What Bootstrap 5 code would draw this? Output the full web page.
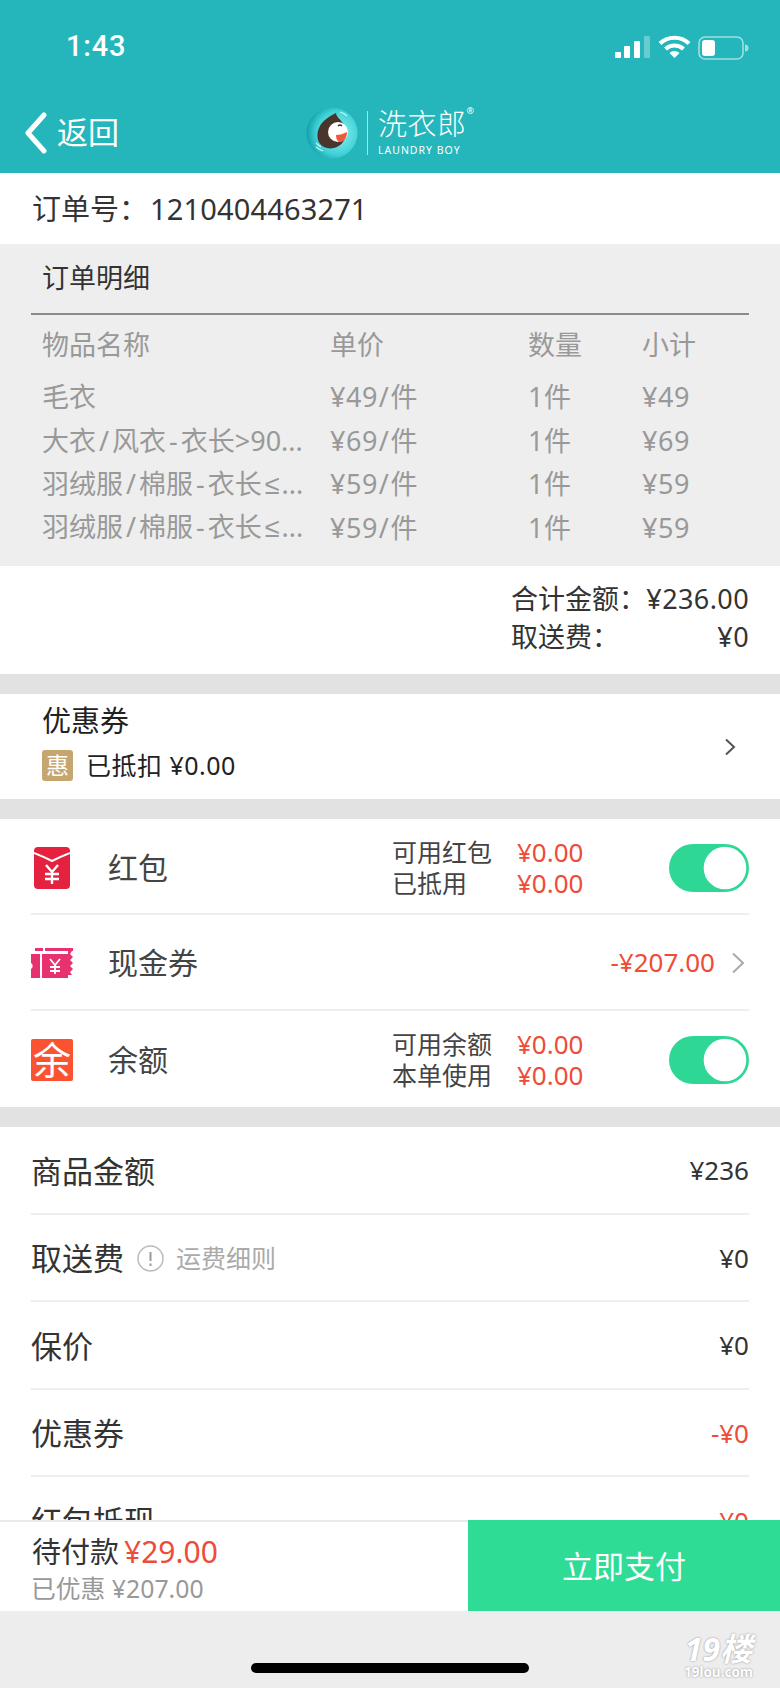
<!DOCTYPE html>
<html lang="zh-CN">
<head>
  <meta charset="UTF-8">
  <title>订单支付</title>
  <meta name="viewport" content="width=device-width, initial-scale=1">
  <link href="https://cdn.jsdelivr.net/npm/bootstrap@5.3.3/dist/css/bootstrap.min.css" rel="stylesheet">
  <style>
    body { margin: 0; background: #ededed; color: #333; font-family: "Noto Sans", "Noto Sans CJK SC", sans-serif; overflow: hidden; }
    .app-shell { height: 1688px; }
    .top-teal { background: #25b6bc; color: #fff; }
    .status-row { height: 92px; padding: 0 30px 0 66px; }
    .clock { font-family: Roboto, sans-serif; font-size: 29px; font-weight: 500; letter-spacing: .8px; margin-top: 2px; }
    .nav-row { height: 81px; padding-left: 24px; }
    .back-link { width: 282px; font-size: 31px; gap: 9px; color: #fff; text-decoration: none; }
    .brand-name { font-size: 29px; line-height: 36px; letter-spacing: .5px; font-weight: 300; margin-top: -4px; }
    .brand-sub { font-size: 10.5px; line-height: 12px; letter-spacing: 1px; margin-top: 2px; white-space: nowrap; }
    .brand-line { width: 1px; height: 44px; background: rgba(255,255,255,.6); margin: 0 10px 0 9px; }
    .reg-mark { font-size: 9px; line-height: 10px; margin-top: 14px; }

    .scroll-body { background: #fff; }
    .order-no { height: 71px; padding-left: 32px; font-size: 29px; color: #333; }
    .order-no span { margin-left: 2px; letter-spacing: .15px; }
    .detail-box { height: 322px; background: #eee; padding: 0 31px; color: #999; font-size: 27px; }
    .detail-title { height: 71px; padding: 0 11px; color: #333; border-bottom: 2px solid #8b8b8b; }
    .detail-table { table-layout: fixed; width: 100%; margin: 0; --bs-table-bg: transparent; --bs-table-color: #999; }
    .detail-table th, .detail-table td { border: 0; padding: 0; font-weight: 400; height: 43.6px; white-space: nowrap; vertical-align: middle; }
    .detail-table th { height: 60.5px; }
    .detail-table td:not(.first-col) { letter-spacing: .5px; }
    .detail-table .first-col { padding-left: 11px; }
    .name-sep { margin: 0 3px; }
    .le-sign { margin: 0 2px 0 3px; font-family: "Liberation Sans", sans-serif; }
    .price-sep { margin: 0 1px; }
    .total-box { height: 108px; padding: 14px 31px 0 0; font-size: 27px; line-height: 37.5px; color: #333; }
    .total-line { width: 238px; }
    .total-line span + span { letter-spacing: .4px; }
    .gap-bar { height: 20px; background: #e2e2e2; }
    .coupon-box { height: 105px; padding: 0 44px 0 42px; }
    .coupon-text { margin-bottom: 10px; }
    .coupon-title { font-size: 29px; line-height: 40px; color: #222; }
    .coupon-line { font-size: 25px; line-height: 34px; margin-top: 7px; color: #222; letter-spacing: .5px; }
    .coupon-tag { width: 31px; height: 31px; border-radius: 3px; background: #c6a66f; color: #fff; font-size: 23px; line-height: 31px; text-align: center; margin-right: 13px; letter-spacing: 0; }

    .pay-row { height: 96px; margin-left: 31px; margin-right: 31px; padding-top: 3px; border-bottom: 2px solid #eee; }
    .pay-row + .pay-row { padding-top: 1px; }
    .pay-row.no-line { border-bottom: 0; height: 96px; }
    .pay-icon { width: 77px; flex: none; }
    .pay-name { font-size: 30px; color: #444; }
    .pay-tag { width: 42px; height: 42px; border-radius: 2px; background: #fb5331; color: #fff; font-size: 38px; line-height: 40px; text-align: center; }
    .pay-side { font-size: 25px; line-height: 31px; color: #444; }
    .pay-side-label { width: 125px; }
    .pay-side-value { width: 152px; color: #ee4c38; font-size: 26px; }
    .pay-cash { font-size: 26px; color: #ee4c38; }
    .pay-switch { width: 80px !important; height: 48px; border: 0; background-color: #2fd795 !important; cursor: pointer; box-shadow: none !important;
      background-image: url("data:image/svg+xml,%3csvg xmlns='http://www.w3.org/2000/svg' viewBox='-4 -4 8 8'%3e%3ccircle r='3.55' fill='%23fff'/%3e%3c/svg%3e") !important; }

    .sum-row { height: 87.6px; margin: 0 31px; padding-top: 2px; border-bottom: 2px solid #eee; }
    .sum-name { font-size: 31px; color: #333; }
    .sum-value { font-size: 26px; color: #333; }
    .sum-value.is-red { color: #ee4c38; }
    .sum-hint { font-size: 25px; color: #aaa; }
    .sum-info { margin: 0 12px 0 13px; }

    .pay-bar { height: 91px; background: #fff; border-top: 2px solid #e9e9e9; }
    .pay-bar-left { padding: 10px 0 0 32px; }
    .pay-due { font-size: 29px; line-height: 40px; color: #333; }
    .pay-due b { font-weight: 400; color: #ee4c38; font-size: 30px; margin-left: 5px; }
    .pay-saved { font-size: 24.8px; line-height: 33px; color: #999; margin-left: -1px; }
    .pay-now { width: 312px; margin-top: -2px; padding-top: 8px; border-radius: 0; border: 0; background: #2fdc95; color: #fff; font-size: 31px; }
    .home-area { height: 77px; background: #ededed; padding-top: 52px; }
    .home-bar { width: 278px; height: 10px; border-radius: 5px; background: #000; }
    .mark-19 { position: absolute; right: 27px; bottom: 8px; color: #fff; text-align: center; font-weight: 700; text-shadow: 0 0 2px #888; }
    .mark-19-big { font-size: 32px; line-height: 32px; font-style: italic; }
    .mark-19-small { font-size: 13.5px; line-height: 15px; }
  </style>
</head>
<body>
  <div class="app-shell d-flex flex-column">

    <!-- top bar -->
    <div class="top-teal flex-shrink-0">
      <div class="status-row d-flex align-items-center justify-content-between">
        <span class="clock">1:43</span>
        <svg width="135" height="30" viewBox="615 30 135 30">
          <rect x="615" y="51" width="6" height="6" rx="1" fill="#fff"/>
          <rect x="624" y="45" width="6" height="12" rx="1" fill="#fff"/>
          <rect x="634" y="40" width="6" height="17" rx="1" fill="#fff"/>
          <rect x="644" y="35" width="6" height="22" rx="1" fill="#fff" opacity=".3"/>
          <path d="M660 42.500a21 21 0 0 1 29 0" fill="none" stroke="#fff" stroke-width="4"/>
          <path d="M665.500 48a13 13 0 0 1 18 0" fill="none" stroke="#fff" stroke-width="4"/>
          <path d="M669.500 52a7 7 0 0 1 10 0l-5 5z" fill="#fff"/>
          <rect x="699" y="36" width="44" height="22" rx="6" fill="none" stroke="#fff" stroke-opacity=".55" stroke-width="1.600"/>
          <rect x="702" y="39" width="13" height="16" rx="3" fill="#fff"/>
          <path d="M745 43.500a3.500 3.500 0 0 1 0 7z" fill="#fff" fill-opacity=".55"/>
        </svg>
      </div>
      <div class="nav-row d-flex align-items-center">
        <a href="#" class="back-link d-flex align-items-center">
          <svg width="24" height="42" viewBox="0 0 24 42"><path d="M20 3 4 21l16 18" fill="none" stroke="#fff" stroke-width="5" stroke-linecap="round" stroke-linejoin="round"/></svg>
          <span>返回</span>
        </a>
        <svg width="52" height="52" viewBox="0 0 52 52">
          <defs>
            <radialGradient id="ballFill" cx=".62" cy=".5" r=".62">
              <stop offset="0" stop-color="#8af3f3"/>
              <stop offset=".7" stop-color="#3fd0d6"/>
              <stop offset="1" stop-color="#129fa9"/>
            </radialGradient>
          </defs>
          <circle cx="26" cy="26" r="25.500" fill="url(#ballFill)"/>
          <path d="M30 6c0 3 3 5 6 9 5 6 5 14 1 20-4 6-13 8-19 5-7-3-8-13-5-19 3-7 9-11 17-15z" fill="#4a352d"/>
          <circle cx="32" cy="25" r="10" fill="#fff"/>
          <path d="M30 28c4 0 7-1 11-3 0 6-3 10-7 10-3 0-4-4-4-7z" fill="#ee5a3c"/>
          <path d="M32 19q2-2 4 0" fill="none" stroke="#333" stroke-width="1.400"/>
          <path d="M10 40q4 3 7 4M10 36q3 3 5 4M34 5q4 1 7 4" fill="none" stroke="#c8f6f6" stroke-width="1.200"/>
        </svg>
        <div class="brand-line"></div>
        <div>
          <div class="brand-name">洗衣郎</div>
          <div class="brand-sub">LAUNDRY BOY</div>
        </div>
        <div class="reg-mark align-self-start">®</div>
      </div>
    </div>

    <!-- scrolling part, cut off by the pay bar -->
    <div class="scroll-body flex-grow-1 overflow-hidden">
      <div class="order-no d-flex align-items-center">订单号：<span>1210404463271</span></div>

      <div class="detail-box">
        <div class="detail-title d-flex align-items-center">订单明细</div>
        <table class="table detail-table">
          <colgroup><col style="width:299px"><col style="width:198px"><col style="width:114px"><col></colgroup>
          <thead>
            <tr><th class="first-col">物品名称</th><th>单价</th><th>数量</th><th>小计</th></tr>
          </thead>
          <tbody>
            <tr><td class="first-col">毛衣</td><td>¥49<span class="price-sep">/</span>件</td><td>1件</td><td>¥49</td></tr>
            <tr><td class="first-col">大衣<span class="name-sep">/</span>风衣<span class="name-sep">-</span>衣长&gt;90...</td><td>¥69<span class="price-sep">/</span>件</td><td>1件</td><td>¥69</td></tr>
            <tr><td class="first-col">羽绒服<span class="name-sep">/</span>棉服<span class="name-sep">-</span>衣长<span class="le-sign">≤</span>...</td><td>¥59<span class="price-sep">/</span>件</td><td>1件</td><td>¥59</td></tr>
            <tr><td class="first-col">羽绒服<span class="name-sep">/</span>棉服<span class="name-sep">-</span>衣长<span class="le-sign">≤</span>...</td><td>¥59<span class="price-sep">/</span>件</td><td>1件</td><td>¥59</td></tr>
          </tbody>
        </table>
      </div>

      <div class="total-box">
        <div class="total-line ms-auto d-flex justify-content-between"><span>合计金额：</span><span>¥236.00</span></div>
        <div class="total-line ms-auto d-flex justify-content-between"><span>取送费：</span><span>¥0</span></div>
      </div>
      <div class="gap-bar"></div>

      <div class="coupon-box d-flex align-items-center justify-content-between">
        <div class="coupon-text">
          <div class="coupon-title">优惠券</div>
          <div class="coupon-line d-flex align-items-center"><span class="coupon-tag">惠</span>已抵扣 ¥0.00</div>
        </div>
        <svg width="12" height="18" viewBox="0 0 12 18"><path d="M2 1.500 10 9l-8 7.500" fill="none" stroke="#555" stroke-width="2"/></svg>
      </div>
      <div class="gap-bar"></div>

      <div class="pay-row d-flex align-items-center">
        <div class="pay-icon">
          <svg class="d-block" width="36" height="42" viewBox="0 0 36 42" style="margin-left:3px">
            <rect width="36" height="42" rx="4" fill="#e4213f"/>
            <path d="M0 6q10 4 18 8 8-4 18-8" fill="none" stroke="#fff" stroke-width="2"/>
            <path d="M12 18l6 7 6-7M18 25v12M11 27h14M11 32h14" fill="none" stroke="#fff" stroke-width="2.400"/>
          </svg>
        </div>
        <span class="pay-name">红包</span>
        <div class="pay-side ms-auto d-flex align-items-center">
          <div class="pay-side-label"><div>可用红包</div><div>已抵用</div></div>
          <div class="pay-side-value"><div>¥0.00</div><div>¥0.00</div></div>
        </div>
        <div class="form-check form-switch m-0 p-0"><input class="form-check-input pay-switch m-0" type="checkbox" role="switch" checked></div>
      </div>

      <div class="pay-row d-flex align-items-center">
        <div class="pay-icon">
          <svg class="d-block" width="42" height="30" viewBox="0 0 42 30">
            <g fill="#e8326f">
              <path d="M0 6h9v24H0v-9a3.500 3.500 0 0 0 0-6z"/>
              <rect x="11" y="6" width="26" height="24"/>
              <rect x="4" y="0" width="8" height="3"/>
              <rect x="14" y="0" width="28" height="3"/>
              <path d="M37 3h4l-2 3 3 3-3 3 3 3-3 3 3 3-3 3 2 3h-4z"/>
            </g>
            <path d="M19 11l5 6 5-6M24 17v9M19 19h10M19 23h10" fill="none" stroke="#fff" stroke-width="1.800"/>
          </svg>
        </div>
        <span class="pay-name">现金券</span>
        <span class="pay-cash ms-auto">-¥207.00</span>
        <svg class="ms-3 me-1" width="14" height="22" viewBox="0 0 14 22"><path d="M2 1.500 12 11 2 20.500" fill="none" stroke="#aaa" stroke-width="2"/></svg>
      </div>

      <div class="pay-row no-line d-flex align-items-center">
        <div class="pay-icon"><div class="pay-tag">余</div></div>
        <span class="pay-name">余额</span>
        <div class="pay-side ms-auto d-flex align-items-center">
          <div class="pay-side-label"><div>可用余额</div><div>本单使用</div></div>
          <div class="pay-side-value"><div>¥0.00</div><div>¥0.00</div></div>
        </div>
        <div class="form-check form-switch m-0 p-0"><input class="form-check-input pay-switch m-0" type="checkbox" role="switch" checked></div>
      </div>
      <div class="gap-bar"></div>

      <div class="sum-row d-flex align-items-center justify-content-between">
        <span class="sum-name">商品金额</span><span class="sum-value">¥236</span>
      </div>
      <div class="sum-row d-flex align-items-center">
        <span class="sum-name">取送费</span>
        <svg class="sum-info" width="27" height="27" viewBox="0 0 27 27">
          <circle cx="13.500" cy="13.500" r="12.500" fill="none" stroke="#bbb" stroke-width="1.500"/>
          <path d="M13.500 7v9M13.500 18.500v2.500" stroke="#999" stroke-width="2"/>
        </svg>
        <span class="sum-hint">运费细则</span>
        <span class="sum-value ms-auto">¥0</span>
      </div>
      <div class="sum-row d-flex align-items-center justify-content-between">
        <span class="sum-name">保价</span><span class="sum-value">¥0</span>
      </div>
      <div class="sum-row d-flex align-items-center justify-content-between">
        <span class="sum-name">优惠券</span><span class="sum-value is-red">-¥0</span>
      </div>
      <div class="sum-row d-flex align-items-center justify-content-between">
        <span class="sum-name">红包抵现</span><span class="sum-value is-red">¥0</span>
      </div>
    </div>

    <!-- pay bar -->
    <div class="pay-bar d-flex flex-shrink-0">
      <div class="pay-bar-left flex-grow-1">
        <div class="pay-due">待付款<b>¥29.00</b></div>
        <div class="pay-saved">已优惠 ¥207.00</div>
      </div>
      <button type="button" class="btn pay-now">立即支付</button>
    </div>
    <div class="home-area d-flex justify-content-center flex-shrink-0 position-relative">
      <div class="home-bar"></div>
      <div class="mark-19"><div class="mark-19-big">19楼</div><div class="mark-19-small">19lou.com</div></div>
    </div>
  </div>
</body>
</html>
